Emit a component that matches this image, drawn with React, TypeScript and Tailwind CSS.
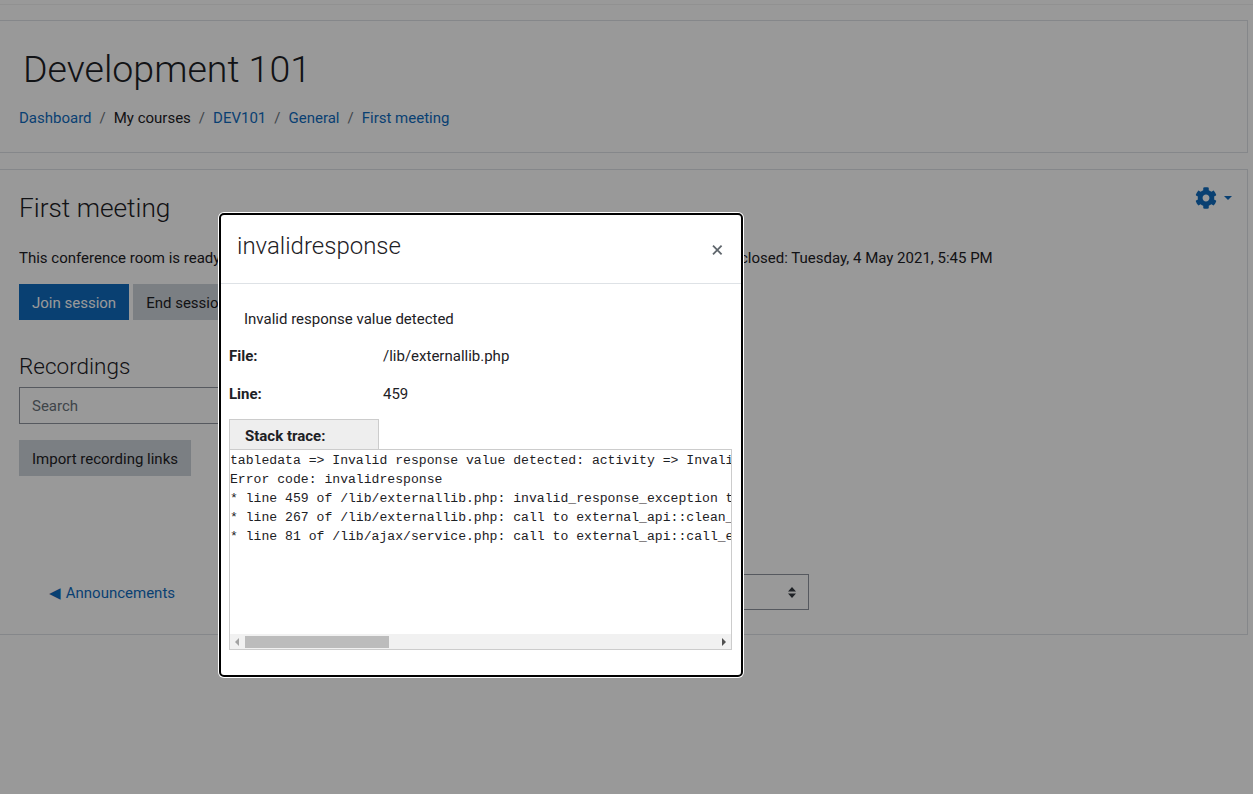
import React from "react";
import { FaCog } from "react-icons/fa";

const link = "text-[#0f6cbf]";

function Crumbs() {
  const sep = <span className="text-[#6a737b] px-[8px]">/</span>;
  return (
    <div className="flex text-[15px] leading-[22px] mt-[12px] ml-[20px]">
      <span className={link}>Dashboard</span>
      {sep}
      <span>My courses</span>
      {sep}
      <span className={link}>DEV101</span>
      {sep}
      <span className={link}>General</span>
      {sep}
      <span className={link}>First meeting</span>
    </div>
  );
}

function Page() {
  return (
    <div className="min-h-[794px] bg-white text-[#1d2125] pt-[4px] pb-[20px]">
      <div className="h-px bg-black/5" />
      <div className="ml-[-2px] mr-[5px] mt-[15px] border border-[#dee2e6] h-[133px] pt-[22px]">
        <h1 className="ml-[24px] text-[37.5px] leading-[52px] font-light">Development 101</h1>
        <Crumbs />
      </div>
      <div className="relative ml-[-2px] mr-[5px] mt-[16px] border border-[#dee2e6] h-[466px] pl-[20px] pt-[20px]">
        <div className="absolute right-[15px] top-[17px] flex items-center gap-[7px] text-[#0f6cbf]">
          <FaCog className="w-[22px] h-[22px]" />
          <span className="w-0 h-0 border-x-[4px] border-x-transparent border-t-[4px] border-t-[#0f6cbf]" />
        </div>
        <h2 className="text-[26.25px] leading-[36px] font-light">First meeting</h2>
        <div className="flex text-[15px] leading-[22px] mt-[21px] whitespace-nowrap">
          <span className="w-[721px] overflow-hidden">This conference room is ready. You can join the session now.</span>
          <span>closed: Tuesday, 4 May 2021, 5:45 PM</span>
        </div>
        <div className="flex gap-[4px] mt-[15px] text-[15px] leading-[22px]">
          <button className="h-[36px] px-[13px] pt-[2px] bg-[#0f6cbf] text-white">Join session</button>
          <button className="h-[36px] px-[13px] pt-[2px] bg-[#ced4da]">End session</button>
        </div>
        <h3 className="text-[22.5px] leading-[30px] font-light mt-[31px]">Recordings</h3>
        <div className="w-[320px] h-[37px] mt-[6px] border border-[#8f959e] px-[12px] text-[15px] leading-[37px] text-[#6a737b]">Search</div>
        <button className="block h-[36px] px-[13px] pt-[2px] mt-[16px] bg-[#ced4da] text-[15px] leading-[22px]">Import recording links</button>
        <div className="flex items-center mt-[98px]">
          <span className={`ml-[30px] pt-[2px] text-[15px] leading-[22px] ${link}`}><span className="mr-px">◀</span> Announcements</span>
          <div className="ml-auto mr-[438px] w-[290px] h-[36px] border border-[#8f959e] flex items-center justify-end pr-[12px]">
            <svg width="8" height="11" viewBox="0 0 8 11"><path d="M4 0 8 4.5H0zM4 11 0 6.5h8z" fill="#343a40" /></svg>
          </div>
        </div>
      </div>
    </div>
  );
}

function Modal() {
  return (
    <div className="absolute left-[219px] top-[213px] w-[524px] h-[464px] bg-white border-2 border-black rounded-[5px] shadow-[0_0_0_1px_#fff] text-[#1d2125]">
      <div className="relative h-[69px] border-b border-[#dee2e6]">
        <h5 className="pl-[16px] pt-[15px] text-[24px] leading-[32px] font-light">invalidresponse</h5>
        <svg className="absolute left-[491px] top-[30px]" width="11" height="10" viewBox="0 0 11 10"><path d="M1 .7l8.6 8.6M9.6.7 1 9.3" stroke="#5f666c" strokeWidth="1.8" /></svg>
      </div>
      <div className="text-[15px] leading-[22px] pl-[8px]">
        <p className="pl-[15px] pt-[24px]">Invalid response value detected</p>
        <div className="flex mt-[15px]"><b className="w-[154px] font-bold">File:</b><span>/lib/externallib.php</span></div>
        <div className="flex mt-[16px]"><b className="w-[154px] font-bold">Line:</b><span>459</span></div>
        <div className="w-[150px] h-[30px] mt-[14px] bg-[#eeeeee] border border-[#cccccc] border-b-0 pl-[15px] font-bold leading-[33px]">Stack trace:</div>
        <div className="relative w-[503px] h-[201px] border border-[#cccccc] overflow-hidden">
          <pre className="font-['Liberation_Mono',monospace] text-[13.125px] leading-[19px] pt-px whitespace-pre text-[#1d2125]">{`tabledata => Invalid response value detected: activity => Invalid response value detected
Error code: invalidresponse
* line 459 of /lib/externallib.php: invalid_response_exception thrown
* line 267 of /lib/externallib.php: call to external_api::clean_returnvalue()
* line 81 of /lib/ajax/service.php: call to external_api::call_external_function()`}</pre>
          <div className="absolute left-0 right-0 bottom-0 h-[15px] bg-[#f1f1f1] flex items-center">
            <svg className="ml-[5px]" width="4" height="8" viewBox="0 0 4 8"><path d="M4 0v8L0 4z" fill="#a3a3a3" /></svg>
            <div className="ml-[6px] w-[144px] h-[12px] bg-[#bcbcbc]" />
            <svg className="ml-auto mr-[5px]" width="4" height="8" viewBox="0 0 4 8"><path d="M0 0v8l4-4z" fill="#505050" /></svg>
          </div>
        </div>
      </div>
    </div>
  );
}

export default function App() {
  return (
    <div className="relative h-[794px] overflow-hidden font-['Roboto',sans-serif]">
      <Page />
      <div className="absolute inset-0 bg-black/40" />
      <Modal />
    </div>
  );
}
